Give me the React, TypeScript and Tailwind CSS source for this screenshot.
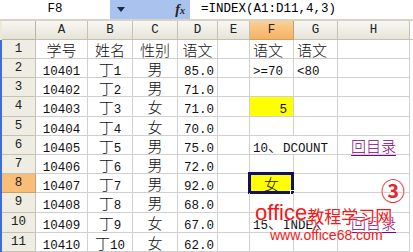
import * as React from "react"

const CJK = /([\u2460-\u24ff\u3000-\u303f\u4e00-\u9fff\uff00-\uffef]+)/

function Txt({ s }: { s: string }) {
  return (
    <>
      {s
        .split(CJK)
        .filter(Boolean)
        .map((part, i) =>
          CJK.test(part) ? (
            <span
              key={i}
              className="font-[family-name:'Noto_Sans_CJK_SC',sans-serif] text-[15px] font-light leading-none"
            >
              {part}
            </span>
          ) : (
            <span
              key={i}
              className="font-[family-name:'Liberation_Mono',monospace] text-[12.5px] leading-none"
            >
              {part}
            </span>
          )
        )}
    </>
  )
}

const cols = ["A", "B", "C", "D", "E", "F", "G", "H"]

const rows: string[][] = [
  ["学号", "姓名", "性别", "语文", "", "语文", "语文", ""],
  ["10401", "丁1", "男", "85.0", "", ">=70", "<80", ""],
  ["10402", "丁2", "男", "71.0", "", "", "", ""],
  ["10403", "丁3", "女", "71.0", "", "5", "", ""],
  ["10404", "丁4", "女", "70.0", "", "", "", ""],
  ["10405", "丁5", "男", "75.0", "", "10、DCOUNT", "", "回目录"],
  ["10406", "丁6", "男", "72.0", "", "", "", ""],
  ["10407", "丁7", "男", "92.0", "", "女", "", ""],
  ["10408", "丁8", "男", "68.0", "", "", "", ""],
  ["10409", "丁9", "女", "67.0", "", "15、INDEX", "", "回目录"],
  ["10410", "丁10", "女", "62.0", "", "", "", ""],
]

function alignFor(r: number, c: number) {
  if (c <= 2) return "justify-center"
  if (c === 3) return r === 0 ? "justify-center" : "justify-end pr-[3px]"
  if (c === 5 && r === 3) return "justify-end pr-[6px]"
  if (c === 5 && r === 7) return "justify-center"
  if (c === 7) return "justify-center"
  return "justify-start pl-[3px]"
}

export default function App() {
  return (
    <div className="relative h-[252px] w-[413px] overflow-hidden bg-white text-black">
      {/* formula bar */}
      <div className="grid h-[21px] grid-cols-[110px_80px_1fr] border-b-2 border-[#d6d3c6]">
        <div className="bg-white text-center font-[family-name:'Liberation_Mono',monospace] text-[12.5px] leading-[19px]">
          F8
        </div>
        <div className="flex items-center bg-[#a9c2ee]">
          <svg width="8" height="5" viewBox="0 0 8 5" className="ml-[7px]">
            <path d="M0 0h8L4 5z" fill="#1c2a4a" />
          </svg>
          <span className="ml-auto mr-[5px] font-[family-name:'Liberation_Serif',serif] text-[14px] font-bold italic leading-none text-[#222]">
            f<span className="text-[10px]">x</span>
          </span>
        </div>
        <div className="flex min-w-0 items-center bg-white pl-[11px]">
          <Txt s="=INDEX(A1:D11,4,3)" />
        </div>
      </div>

      {/* sheet */}
      <div className="grid grid-cols-[2px_34px_52px_45px_45px_40px_32px_44px_44px_72px_3px] grid-rows-[19px_19px_19px_19px_20px_19px_19px_19px_19px_20px_20px_19px]">
        {/* header row */}
        <div className="bg-[#ece9d8]" />
        <div className="border-b border-r border-[#b9b6a6] bg-gradient-to-b from-[#f7f6f1] to-[#e4e2d6]" />
        {cols.map((c) => (
          <div
            key={c}
            className={
              c === "F"
                ? "flex items-center justify-center border-b border-r border-[#c7a06a] bg-gradient-to-b from-[#fbcf95] to-[#f6b163] text-[#222]"
                : "flex items-center justify-center border-b border-r border-[#c5c2b4] bg-gradient-to-b from-[#f8f7f3] to-[#e6e4d9] text-[#222]"
            }
          >
            <Txt s={c} />
          </div>
        ))}
        <div className="border-b border-[#c5c2b4] bg-white" />

        {rows.map((row, r) => (
          <React.Fragment key={r}>
            <div className="bg-[#3d6dd6]" />
            <div
              className={
                r === 7
                  ? "flex items-center justify-center border-b border-r border-[#c7a06a] bg-[#f8bd78] text-[#222]"
                  : "flex items-center justify-center border-b border-r border-[#c5c2b4] bg-[#eeece3] text-[#222]"
              }
            >
              <Txt s={String(r + 1)} />
            </div>
            {row.map((v, c) => {
              const overflow = c === 5 && (r === 5 || r === 9)
              const yellow = c === 5 && (r === 3 || r === 7)
              const link = c === 7 && v !== ""
              return (
                <div
                  key={c}
                  className={[
                    "relative flex items-center whitespace-nowrap border-b border-[#d0d0d0] pt-[1px]",
                    overflow ? "overflow-visible" : "border-r",
                    yellow ? "bg-[#ffff00]" : "",
                    alignFor(r, c),
                  ].join(" ")}
                >
                  {link ? (
                    <span className="text-[#800080] underline decoration-[#800080] underline-offset-[3px]">
                      <Txt s={v} />
                    </span>
                  ) : (
                    <span className="text-[#111]">
                      <Txt s={v} />
                    </span>
                  )}
                  {c === 5 && r === 7 && (
                    <div className="pointer-events-none absolute -left-[2px] -top-[2px] h-[22px] w-[46px] border-[3px] border-[#10105e]">
                      <div className="absolute -bottom-[4px] -right-[4px] h-[5px] w-[5px] border border-white bg-[#10105e]" />
                    </div>
                  )}
                </div>
              )
            })}
            <div className="bg-white" />
          </React.Fragment>
        ))}
      </div>

      {/* watermark */}
      <div className="absolute left-[381px] top-[178px] font-[family-name:'Noto_Sans_CJK_SC',sans-serif] text-[24px] font-bold leading-none text-[#e3262c] [text-shadow:0_0_2px_#fff,0_0_2px_#fff]">
        ③
      </div>
      <div className="absolute left-[255px] top-[202px] flex items-end whitespace-nowrap leading-none text-[#f01818] [text-shadow:0_0_1px_#fff,0_0_2px_#fff,0_0_2px_#fff]">
        <span className="font-[family-name:'Liberation_Sans',sans-serif] text-[22px]">office</span>
        <span className="font-[family-name:'Noto_Sans_CJK_SC',sans-serif] text-[17px]">教程学习网</span>
      </div>
      <div className="absolute left-[270px] top-[228px] whitespace-nowrap font-[family-name:'Liberation_Sans',sans-serif] text-[14px] leading-none text-[#f01818] [text-shadow:0_0_1px_#fff,0_0_2px_#fff]">
        www.office68.com
      </div>
    </div>
  )
}
